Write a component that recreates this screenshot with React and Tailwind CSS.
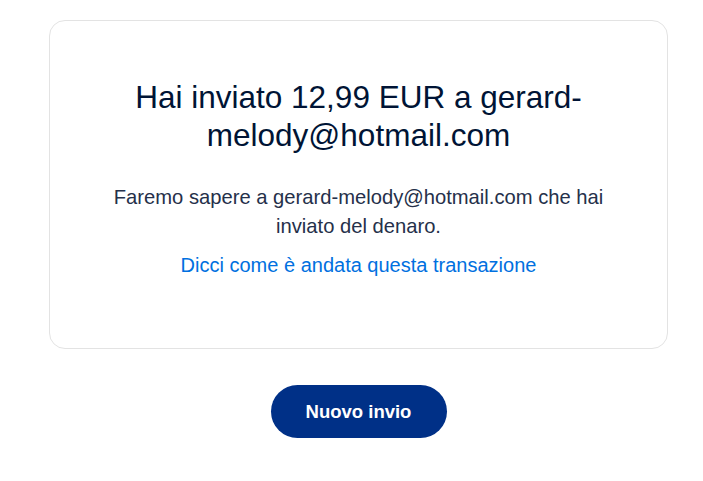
export default function App() {
  return (
    <div
      className="min-h-[481px] bg-white pt-5"
      style={{ fontFamily: '"Liberation Sans", Arial, sans-serif' }}
    >
      <div className="ml-[49px] flex w-[619px] flex-col items-center">
        <section className="w-full rounded-2xl border border-[#e3e3e3] px-14 pb-[68px] pt-[57px] text-center">
          <h1 className="text-[31.5px] leading-[38px] font-normal text-[#001435]">
            Hai inviato 12,99 EUR a gerard-melody@hotmail.com
          </h1>
          <p className="mt-[29px] text-[20.2px] leading-[29px] text-[#25304a]">
            Faremo sapere a gerard-melody@hotmail.com che hai inviato del denaro.
          </p>
          <a href="#" className="mt-[10px] block text-[20px] leading-[29px] text-[#0070e0]">
            Dicci come è andata questa transazione
          </a>
        </section>

        <button
          type="button"
          className="mt-[36px] h-[53px] w-[176px] rounded-full bg-[#003087] text-[18.5px] font-bold text-white"
        >
          Nuovo invio
        </button>
      </div>
    </div>
  )
}
